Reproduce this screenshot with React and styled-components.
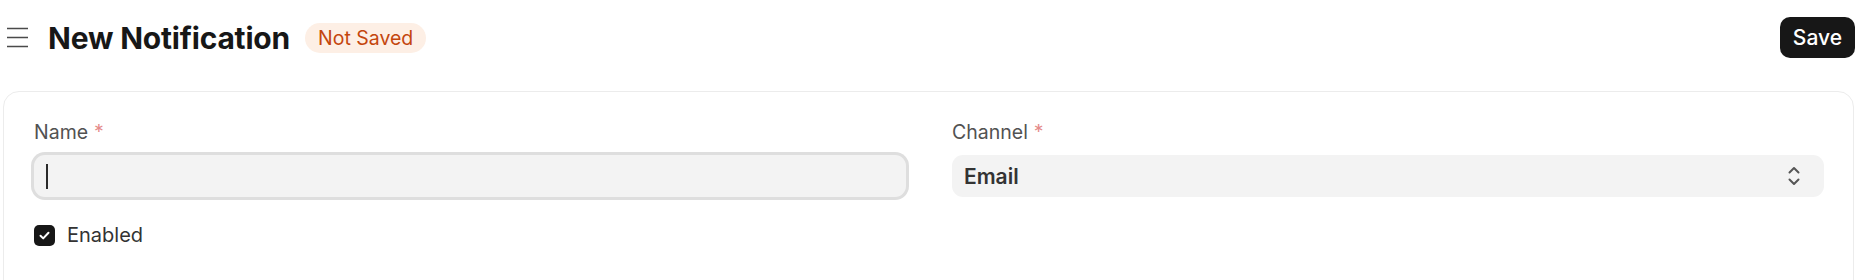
import React from 'react';
import styled, { createGlobalStyle } from 'styled-components';

const GlobalStyle = createGlobalStyle`
  html, body {
    margin: 0;
    padding: 0;
    background: #ffffff;
    font-family: Inter, "Noto Sans", sans-serif;
    color: #171717;
  }
`;

const Page = styled.div`
  width: 1864px;
  height: 280px;
  overflow: hidden;
`;

const Header = styled.header`
  height: 75px;
  display: flex;
  align-items: center;
  padding: 0 9px 0 7px;
  box-sizing: border-box;
`;

const MenuButton = styled.button`
  width: 21px;
  height: 21px;
  padding: 0;
  border: 0;
  background: none;
  display: flex;
  align-items: center;
  justify-content: center;
  margin-right: 20px;
`;

const Title = styled.h1`
  margin: 0;
  font-size: 30px;
  font-weight: 700;
  letter-spacing: -0.2px;
  color: #171717;
`;

const Badge = styled.span`
  margin-left: 15px;
  height: 30px;
  padding: 0 13px;
  border-radius: 15px;
  background: #fdefe5;
  color: #c4460e;
  font-size: 19.5px;
  display: flex;
  align-items: center;
`;

const Spacer = styled.div`
  flex: 1;
`;

const SaveButton = styled.button`
  height: 41px;
  padding: 0 13px;
  border: 0;
  border-radius: 10px;
  background: #171717;
  color: #ffffff;
  font-family: inherit;
  font-size: 21px;
  font-weight: 500;
`;

const Card = styled.section`
  margin: 16px 10px 0 3px;
  height: 220px;
  border: 1px solid #ececec;
  border-radius: 16px;
  padding: 25px 29px 0 30px;
  box-sizing: border-box;
`;

const Grid = styled.div`
  display: grid;
  grid-template-columns: 1fr 1fr;
  column-gap: 46px;
`;

const Field = styled.div`
  display: flex;
  flex-direction: column;
`;

const Label = styled.label`
  font-size: 19.5px;
  line-height: 30px;
  color: #525252;
  margin-bottom: 8px;
`;

const Required = styled.span`
  color: #e58b8b;
  margin-left: 6px;
`;

const TextBox = styled.div`
  height: 42px;
  border-radius: 11px;
  background: #f3f3f3;
  box-shadow: 0 0 0 3px #dedede;
  display: flex;
  align-items: center;
  padding-left: 12px;
`;

const Caret = styled.span`
  width: 1.5px;
  height: 25px;
  background: #2a2a2a;
`;

const Select = styled.div`
  height: 42px;
  border-radius: 11px;
  background: #f3f3f3;
  display: flex;
  align-items: center;
  justify-content: space-between;
  padding: 0 24px 0 12px;
  font-size: 21px;
  font-weight: 600;
  color: #333333;
`;

const CheckRow = styled.label`
  display: flex;
  align-items: center;
  gap: 12px;
  margin-top: 26px;
  font-size: 20px;
  color: #333333;
`;

const CheckBox = styled.span`
  width: 21px;
  height: 21px;
  border-radius: 5px;
  background: #171717;
  display: flex;
  align-items: center;
  justify-content: center;
`;

const MenuIcon = () => (
  <svg width="21" height="21" viewBox="0 0 21 21" fill="none">
    <path d="M0 1.5h21M0 10.5h21M0 19.5h21" stroke="#4a4a4a" strokeWidth="1.6" />
  </svg>
);

const UpDownIcon = () => (
  <svg width="12" height="20" viewBox="0 0 12 20" fill="none">
    <path d="M1.5 6.5 6 2l4.5 4.5M1.5 13.5 6 18l4.5-4.5" stroke="#555" strokeWidth="2" strokeLinecap="round" strokeLinejoin="round" />
  </svg>
);

const CheckIcon = () => (
  <svg width="13" height="13" viewBox="0 0 13 13" fill="none">
    <path d="M2.5 6.8 5.2 9.4 10.5 3.8" stroke="#fff" strokeWidth="2" strokeLinecap="round" strokeLinejoin="round" />
  </svg>
);

const App = () => {
  return (
    <Page>
      <GlobalStyle />
      <Header>
        <MenuButton aria-label="Menu">
          <MenuIcon />
        </MenuButton>
        <Title>New Notification</Title>
        <Badge>Not Saved</Badge>
        <Spacer />
        <SaveButton>Save</SaveButton>
      </Header>

      <Card>
        <Grid>
          <Field>
            <Label>
              Name<Required>*</Required>
            </Label>
            <TextBox>
              <Caret />
            </TextBox>
            <CheckRow>
              <CheckBox>
                <CheckIcon />
              </CheckBox>
              Enabled
            </CheckRow>
          </Field>

          <Field>
            <Label>
              Channel<Required>*</Required>
            </Label>
            <Select>
              Email
              <UpDownIcon />
            </Select>
          </Field>
        </Grid>
      </Card>
    </Page>
  );
};

export default App;
